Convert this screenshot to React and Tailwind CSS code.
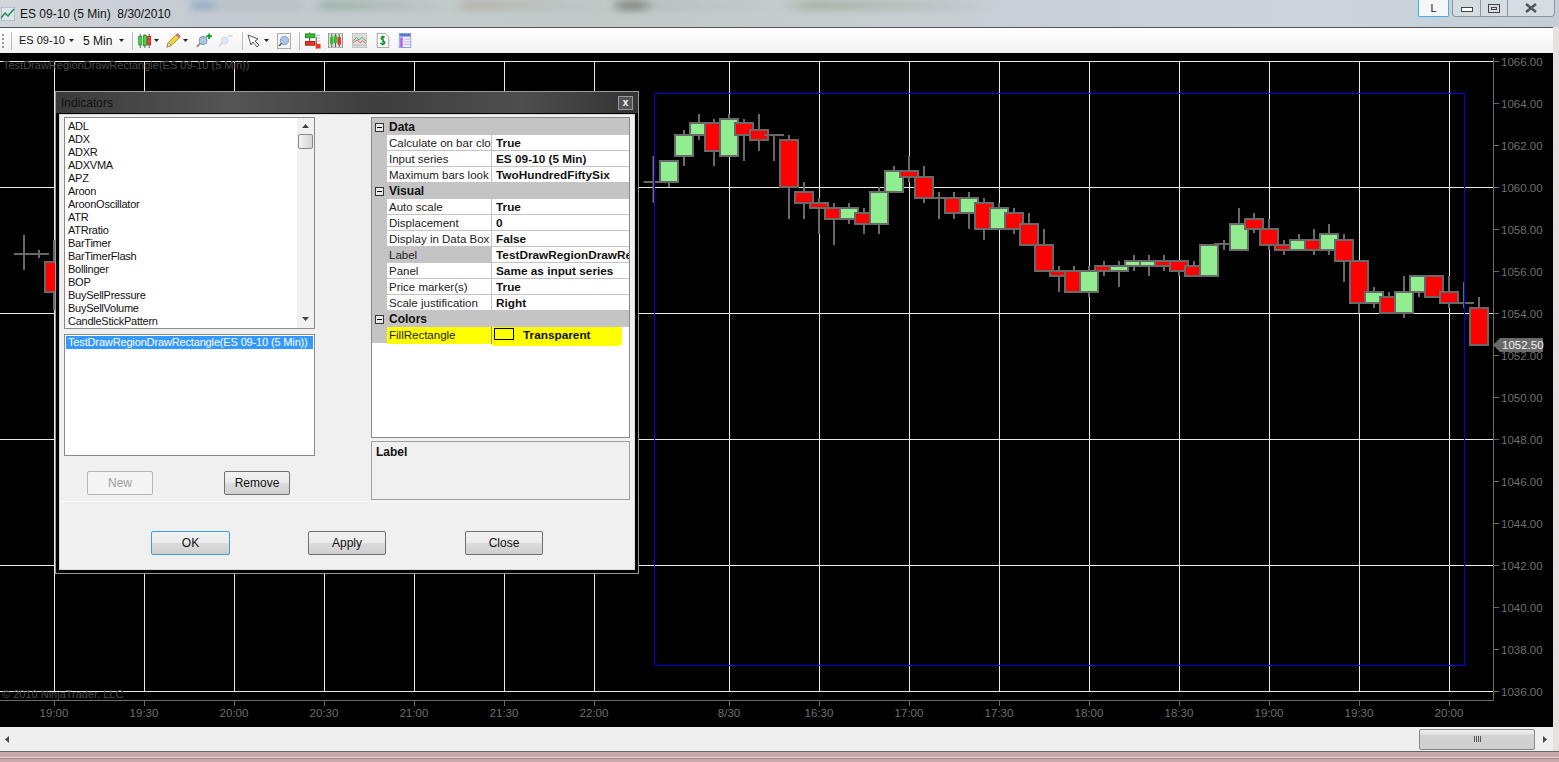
import React from 'react';

const font = { fontFamily: '"Liberation Sans", Arial, sans-serif' };

// [center x, body top, body bottom, wick top, wick bottom, color]
const G = '#90ee90';
const R = '#ff0000';
const candles = [
  [653.5, 182, 182, 156, 203, R],
  [669, 161, 182, 161, 187, G],
  [684, 135, 156, 130, 166, G],
  [699, 123, 135, 114, 140, G],
  [714, 123, 151, 119, 166, R],
  [729, 119, 156, 114, 156, G],
  [744, 123, 135, 119, 161, R],
  [759, 130, 140, 114, 151, R],
  [774, 135, 135, 135, 161, R],
  [789, 140, 187, 135, 219, R],
  [804, 192, 203, 182, 219, R],
  [819, 203, 208, 198, 234, R],
  [834, 208, 219, 203, 245, R],
  [849, 208, 219, 203, 224, G],
  [864, 213, 224, 208, 234, R],
  [879, 192, 224, 187, 234, G],
  [894, 171, 192, 166, 192, G],
  [909, 171, 177, 156, 182, R],
  [924, 177, 198, 166, 203, R],
  [939, 198, 198, 192, 219, R],
  [954, 198, 213, 192, 219, R],
  [969, 198, 213, 192, 229, G],
  [984, 203, 229, 198, 240, R],
  [999, 208, 229, 203, 229, G],
  [1014, 213, 229, 208, 234, R],
  [1029, 224, 245, 213, 245, R],
  [1044, 245, 271, 229, 271, R],
  [1059, 271, 276, 266, 292, R],
  [1074, 271, 292, 266, 292, R],
  [1089, 271, 292, 266, 297, G],
  [1104, 266, 271, 261, 276, R],
  [1119, 266, 271, 261, 287, G],
  [1134, 261, 266, 255, 271, G],
  [1149, 261, 266, 255, 276, G],
  [1164, 261, 266, 255, 271, R],
  [1179, 261, 271, 261, 276, R],
  [1194, 266, 276, 261, 276, R],
  [1209, 245, 276, 245, 276, G],
  [1224, 244, 244, 240, 250, R],
  [1239, 224, 250, 208, 250, G],
  [1254, 219, 229, 213, 233, R],
  [1269, 229, 245, 219, 250, R],
  [1284, 245, 250, 240, 255, R],
  [1299, 240, 250, 234, 250, G],
  [1314, 240, 250, 229, 255, R],
  [1329, 234, 250, 224, 255, G],
  [1344, 240, 261, 234, 282, R],
  [1359, 261, 303, 261, 313, R],
  [1374, 292, 303, 287, 308, G],
  [1389, 297, 313, 292, 313, R],
  [1404, 292, 313, 276, 318, G],
  [1419, 276, 292, 276, 297, G],
  [1434, 276, 297, 276, 297, R],
  [1449, 292, 303, 276, 308, R],
  [1464, 303, 303, 282, 308, R],
  [1479, 308, 345, 297, 345, R],
  [24, 254, 254, 235, 270, R],
  [39, 254, 254, 250, 258, R],
  [54, 262, 292, 240, 310, R],
];

const vGrid = [54, 144, 234, 324, 414, 504, 594, 729, 819, 909, 999, 1089, 1179, 1269, 1359, 1449];
const times = ['19:00', '19:30', '20:00', '20:30', '21:00', '21:30', '22:00', '8/30', '16:30', '17:00', '17:30', '18:00', '18:30', '19:00', '19:30', '20:00'];
const hGrid = [61, 187, 313, 439, 565, 691];
const prices = Array.from({ length: 16 }, (_, i) => ({ y: 61 + i * 42, label: (1066 - i * 2).toFixed(2) }));

const indicators = ['ADL', 'ADX', 'ADXR', 'ADXVMA', 'APZ', 'Aroon', 'AroonOscillator', 'ATR', 'ATRratio', 'BarTimer', 'BarTimerFlash', 'Bollinger', 'BOP', 'BuySellPressure', 'BuySellVolume', 'CandleStickPattern'];

const grid = [
  { title: 'Data', rows: [['Calculate on bar clos', 'True'], ['Input series', 'ES 09-10 (5 Min)'], ['Maximum bars look l', 'TwoHundredFiftySix']] },
  { title: 'Visual', rows: [['Auto scale', 'True'], ['Displacement', '0'], ['Display in Data Box', 'False'], ['Label', 'TestDrawRegionDrawRe', true], ['Panel', 'Same as input series'], ['Price marker(s)', 'True'], ['Scale justification', 'Right']] },
];

const Caret = ({ className = '' }) => (
  <svg width="5" height="3" viewBox="0 0 5 3" className={`shrink-0 ${className}`}><path d="M0 0h5L2.500 3z" fill="#222" /></svg>
);

const Chart = () => (
  <svg width="1553" height="674" viewBox="0 53 1553 674" className="block" style={font}>
    {vGrid.map(x => <line key={x} x1={x + 0.5} y1="61" x2={x + 0.5} y2="691" stroke="#e8e8e8" />)}
    {hGrid.map(y => <line key={y} x1="0" y1={y + 0.5} x2="1493" y2={y + 0.5} stroke="#e8e8e8" />)}
    <path d="M1493.500 58V700.500H0" fill="none" stroke="#6a6a6a" />
    {vGrid.map((x, i) => (
      <g key={x}>
        <line x1={x + 0.5} y1="700" x2={x + 0.5} y2="706" stroke="#6a6a6a" />
        <text x={x} y="717" fill="#6f6f6f" fontSize="11.5" textAnchor="middle">{times[i]}</text>
      </g>
    ))}
    {prices.map(p => (
      <g key={p.y}>
        <line x1="1493" y1={p.y + 0.5} x2="1499" y2={p.y + 0.5} stroke="#6a6a6a" />
        <text x="1501" y={p.y + 4.5} fill="#6f6f6f" fontSize="11.5">{p.label}</text>
      </g>
    ))}
    {candles.map(([x, top, bot, wt, wb, color], i) => (
      <g key={i}>
        <line x1={x} y1={wt} x2={x} y2={wb} stroke="#696969" strokeWidth="2" />
        {top === bot
          ? <line x1={x - 10} y1={top} x2={x + 10} y2={top} stroke="#696969" strokeWidth="2" />
          : <rect x={x - 9} y={top} width="18" height={bot - top} fill={color} stroke="#696969" strokeWidth="2" />}
      </g>
    ))}
    <rect x="654.500" y="93.500" width="810" height="572" fill="none" stroke="#0000e6" />
    <path d="M1493 345l7-7h43v14h-43z" fill="#6a6a6a" />
    <text x="1502" y="349" fill="#f4f4f4" fontSize="11.5">1052.50</text>
    <text x="3" y="69" fill="#4c4c4c" fontSize="11">TestDrawRegionDrawRectangle(ES 09-10 (5 Min))</text>
    <text x="2" y="698" fill="#4c4c4c" fontSize="11">© 2010 NinjaTrader, LLC</text>
  </svg>
);

const Btn = ({ children, w = 'w-[78px]', focus, disabled }) => (
  <button
    className={`${w} h-[24px] rounded-[2px] border text-[12px] ${disabled ? 'border-[#b5b5b5] bg-[#f4f4f4] text-[#a0a0a0]' : 'bg-[linear-gradient(#f2f2f2_0%,#ebebeb_48%,#dcdcdc_50%,#cfcfcf_100%)] text-[#111]'} ${focus ? 'border-[#3c9ed8]' : disabled ? '' : 'border-[#707070]'}`}
  >
    {children}
  </button>
);

const GroupHead = ({ title }) => (
  <div className="flex h-[16px] items-center bg-[#c4c4c4]">
    <div className="flex w-[15px] justify-center">
      <div className="flex h-[9px] w-[9px] items-center justify-center border border-[#333] bg-[#e8e8e8]">
        <div className="h-px w-[5px] bg-black" />
      </div>
    </div>
    <span className="pl-[2px] text-[12px] font-bold text-[#111]">{title}</span>
  </div>
);

const GridRow = ({ name, value, selected }) => (
  <div className="flex h-[16px] bg-[#c4c4c4] text-[12px] leading-[17px]">
    <div className="w-[15px] shrink-0" />
    <div className={`w-[105px] shrink-0 overflow-hidden whitespace-nowrap border-b border-r border-[#c4c4c4] pl-[2px] text-[11.5px] text-[#222] ${selected ? 'bg-[#c4c4c4]' : 'bg-white'}`}>{name}</div>
    <div className="flex-1 overflow-hidden whitespace-nowrap border-b border-[#c4c4c4] bg-white pl-[4px] text-[11.8px] font-bold text-[#111]">{value}</div>
  </div>
);

const IndicatorsDialog = () => (
  <div className="absolute left-[55px] top-[91px] flex h-[483px] w-[584px] flex-col border border-[#9a9a9a] bg-black" style={font}>
    <div className="flex h-[21px] shrink-0 items-center justify-between bg-[linear-gradient(90deg,#3a3a3a,#555_30%,#3e3e3e_55%,#4e4e4e_80%,#333)] pl-[5px] pr-[5px]">
      <span className="text-[12px] text-[#111]">Indicators</span>
      <div className="flex h-[14px] w-[15px] items-center justify-center border border-[#999] bg-[#555] text-[10px] font-bold leading-none text-white">x</div>
    </div>
    <div className="m-[3px] mt-[1px] flex flex-1 flex-col border border-[#d8d8d8] bg-[#f0f0f0]">
      <div className="flex h-[387px] shrink-0 border-b border-[#fafafa]">
        <div className="ml-[4px] mt-[2px] flex w-[251px] flex-col">
          <div className="flex h-[212px] border border-[#8a8a8a] bg-white pl-[3px]">
            <div className="flex-1 pt-[2px] text-[11px] leading-[13px] tracking-[-0.25px] text-[#111]">
              {indicators.map(n => <div key={n}>{n}</div>)}
            </div>
            <div className="flex w-[17px] flex-col items-center bg-[#f1f1f1]">
              <svg width="7" height="4" viewBox="0 0 7 4" className="mt-[6px]"><path d="M3.500 0L7 4H0z" fill="#444" /></svg>
              <div className="mt-[6px] h-[15px] w-[15px] rounded-[2px] border border-[#888] bg-[linear-gradient(90deg,#f2f2f2,#d4d4d4)]" />
              <svg width="7" height="4" viewBox="0 0 7 4" className="mt-auto mb-[7px]"><path d="M0 0h7L3.500 4z" fill="#444" /></svg>
            </div>
          </div>
          <div className="mt-[5px] h-[122px] border border-[#8a8a8a] bg-white p-px">
            <div className="h-[13px] whitespace-nowrap bg-[#3399ff] pl-[2px] text-[11px] leading-[13px] tracking-[-0.15px] text-white">TestDrawRegionDrawRectangle(ES 09-10 (5 Min))</div>
          </div>
          <div className="mt-[15px] flex pl-[23px]">
            <Btn w="w-[66px]" disabled>New</Btn>
            <div className="w-[71px]" />
            <Btn w="w-[66px]">Remove</Btn>
          </div>
        </div>
        <div className="ml-[56px] mt-[2px] flex w-[259px] flex-col">
          <div className="h-[321px] border border-[#8a8a8a] bg-white">
            <div className="h-px bg-[#c4c4c4]" />
            {grid.map(g => (
              <div key={g.title}>
                <GroupHead title={g.title} />
                {g.rows.map(([name, value, sel]) => <GridRow key={name} name={name} value={value} selected={sel} />)}
              </div>
            ))}
            <GroupHead title="Colors" />
            <div className="flex h-[20px] items-start text-[12px] leading-[16px]">
              <div className="h-[16px] w-[15px] shrink-0 bg-[#c4c4c4]" />
              <div className="h-[17px] w-[105px] shrink-0 border-r border-[#999] bg-[#ffff00] pl-[2px] text-[11.5px] text-[#222]">FillRectangle</div>
              <div className="flex h-[19px] w-[130px] shrink-0 rounded-br-[4px] bg-[#ffff00] pl-[2px] pt-[1px] text-[11.8px] font-bold text-[#111]">
                <div className="mr-[9px] h-[12px] w-[20px] border border-black" />
                <span className="-mt-[1px]">Transparent</span>
              </div>
            </div>
          </div>
          <div className="mt-[3px] h-[59px] border border-[#a0a0a0] p-[3px] pl-[4px] text-[12px] font-bold leading-[14px] text-[#111]">Label</div>
        </div>
      </div>
      <div className="flex flex-1 items-start pl-[91px] pt-[29px]">
        <Btn w="w-[79px]" focus>OK</Btn>
        <div className="w-[78px]" />
        <Btn>Apply</Btn>
        <div className="w-[79px]" />
        <Btn>Close</Btn>
      </div>
    </div>
  </div>
);

const CandleIcon = () => (
  <svg width="15" height="14" viewBox="0 0 18 18" className="shrink-0">
    <path d="M3.500 0v18M9.500 0v18M15 0v18" stroke="#333" />
    <rect x="1.500" y="3" width="4" height="11" fill="#4cd14c" stroke="#2a8a2a" />
    <rect x="7.500" y="2" width="4" height="13" fill="#4cd14c" stroke="#2a8a2a" />
    <rect x="13" y="3" width="4" height="11" fill="#ee4433" stroke="#993322" />
  </svg>
);

const Pencil = () => (
  <svg width="15" height="15" viewBox="0 0 17 17" className="shrink-0">
    <path d="M1 16l1.500-5L11.500 2l3.500 3.500L6 14z" fill="#f2d43c" stroke="#a88a20" />
    <path d="M11.500 2l1.500-1.500 3.500 3.500L15 5z" fill="#e88" stroke="#a66" />
    <path d="M1 16l1.500-5 3.500 3z" fill="#eed" stroke="#887" />
  </svg>
);

const Zoomer = ({ faded, plus }) => (
  <svg width={plus ? 17 : 16} height="15" viewBox="0 0 24 20" className={faded ? 'shrink-0 opacity-30' : 'shrink-0'}>
    <circle cx="10" cy="10" r="5.500" fill="#a9c8e8" stroke="#8a9aaa" strokeWidth="1.500" />
    <path d="M6 14l-5 5" stroke="#8a8f94" strokeWidth="2.500" />
    {plus
      ? <path d="M18.500 0v8M14.500 4h8" stroke="#10a020" strokeWidth="2.500" />
      : <path d="M15 3h7" stroke="#666" strokeWidth="2" />}
  </svg>
);

const Sep = ({ className }) => <div className={`h-[18px] w-px shrink-0 bg-[#bbb] ${className}`} />;

const Toolbar = () => (
  <div className="flex h-[26px] shrink-0 items-center border-t border-[#555] bg-[linear-gradient(#fff,#f2f2f2)] text-[12px] text-[#111]" style={font}>
    <div className="ml-[2px] h-[14px] w-[3px] shrink-0 border-l-2 border-dotted border-[#999]" />
    <Sep className="ml-[6px]" />
    <span className="ml-[7px] w-[44px] whitespace-nowrap text-[11px]">ES 09-10</span>
    <Caret className="ml-[6px]" />
    <span className="ml-[9px] w-[30px] whitespace-nowrap">5 Min</span>
    <Caret className="ml-[6px]" />
    <Sep className="ml-[8px]" />
    <div className="ml-[4px]"><CandleIcon /></div>
    <Caret className="ml-[2px]" />
    <div className="ml-[7px]"><Pencil /></div>
    <Caret className="ml-[2px]" />
    <div className="ml-[8px]"><Zoomer plus /></div>
    <div className="ml-[5px]"><Zoomer faded /></div>
    <Sep className="ml-[8px]" />
    <svg width="13" height="14" viewBox="0 0 13 14" className="ml-[4px] shrink-0"><path d="M1 1l3 10 2-3 4 5 2-2-4-4 3-2z" fill="#fff" stroke="#555" /></svg>
    <Caret className="ml-[4px]" />
    <div className="ml-[8px] flex h-[16px] w-[14px] shrink-0 items-center justify-center border border-[#aaa] bg-[#f6f6f6]">
      <svg width="12" height="12" viewBox="0 0 13 13"><circle cx="7" cy="6" r="4.500" fill="#a9c8e8" stroke="#7f98b0" /><path d="M4 9l-3 3" stroke="#555" strokeWidth="1.500" /></svg>
    </div>
    <Sep className="ml-[8px]" />
    <svg width="16" height="17" viewBox="0 0 17 17" className="ml-[5px] shrink-0">
      <path d="M5 0v9M12 5v12" stroke="#333" />
      <rect x="0.500" y="1.500" width="10" height="4" fill="#33bb33" stroke="#228822" />
      <rect x="0.500" y="9.500" width="10" height="4" fill="#e83322" stroke="#992211" />
      <rect x="11.500" y="12" width="5" height="5" fill="#e83322" />
      <path d="M11 3h5M11 6h5M11 9h5" stroke="#bbb" />
    </svg>
    <svg width="15" height="15" viewBox="0 0 17 18" className="ml-[7px] shrink-0">
      <rect width="17" height="18" fill="#ddd" stroke="#888" />
      <path d="M4 1v16M13 1v16M8.500 1v16" stroke="#444" />
      <rect x="2" y="5" width="4" height="8" fill="#33bb33" /><rect x="6.500" y="3" width="4" height="9" fill="#33bb33" /><rect x="11" y="5" width="4" height="9" fill="#e83322" />
    </svg>
    <svg width="15" height="15" viewBox="0 0 17 17" className="ml-[9px] shrink-0">
      <rect width="17" height="17" fill="#dcdcdc" stroke="#aaa" />
      <path d="M1 9l4-4 3 3 3-3 5 4" fill="none" stroke="#3aaa55" />
      <path d="M1 11l5-3 3 3 3-2 4 3" fill="none" stroke="#e05555" />
      <path d="M1 14h15" stroke="#bbb" />
    </svg>
    <svg width="14" height="15" viewBox="0 0 14 17" className="ml-[9px] shrink-0">
      <path d="M.5.500h9l4 4v12H.500z" fill="#fafafa" stroke="#999" />
      <path d="M9 4.500C6 3 4 5 5.500 7S10 9.500 9 11.500 5 13 4 11M7 3v11" fill="none" stroke="#108a30" strokeWidth="1.500" />
    </svg>
    <svg width="14" height="15" viewBox="0 0 14 17" className="ml-[8px] shrink-0">
      <rect x=".5" y=".5" width="13" height="16" fill="#eef" stroke="#8899cc" />
      <rect x="1" y="1" width="12" height="3" fill="#5577cc" />
      <rect x="1.500" y="5" width="3" height="11" fill="#aa66ee" />
      <path d="M6 7h7M6 10h7M6 13h7" stroke="#b4b4d8" />
    </svg>
  </div>
);

export default function App() {
  return (
    <div className="relative flex h-[762px] w-[1559px] flex-col overflow-hidden bg-[#e6e0e0]" style={font}>
      {/* Title bar, aero glass over a blurred browser window */}
      <div className="relative flex h-[27px] shrink-0 items-center overflow-hidden bg-[linear-gradient(90deg,#d2d6da,#c4ccd2_13%,#c2cac8_40%,#c8d0d6_65%,#cbd4dd_85%,#c6ced6)] pl-[1px]">
        <div className="absolute left-0 right-0 top-0 h-[11px] opacity-45 blur-[3px] bg-[linear-gradient(90deg,transparent_12%,#6f93b5_12.500%,#6f93b5_13.500%,#aeb6ba_14%,#aeb6ba_19%,transparent_20%,#7a9a8a_21%,#aab4b0_26%,transparent_29%,#a8a08a_30%,#b4bab8_36%,transparent_39%,#4a4a44_40%,#4a4a44_41%,#aab2b4_42%,transparent_50%,#8a9a78_52%,#b0b8b8_60%,transparent_64%)]" />
        <svg width="14" height="14" viewBox="0 0 14 14" className="relative">
          <rect width="14" height="14" fill="#dde4ee" stroke="#8fa0b8" />
          <path d="M0 11l4-5 3 3 6-7" fill="none" stroke="#1f8a4a" strokeWidth="1.500" />
        </svg>
        <span className="relative ml-[5px] text-[12px] text-[#111]">ES 09-10 (5 Min)&nbsp;&nbsp;8/30/2010</span>
        <div className="relative ml-auto flex items-start self-start">
          <div className="flex h-[17px] w-[31px] items-center justify-center rounded-b-[2px] border border-t-0 border-[#39b4e6] bg-[#f4f6f8] text-[11px] text-[#223]">L</div>
          <div className="ml-[3px] mr-[4px] flex h-[17px] rounded-b-[4px] border border-t-0 border-[#8c96a0] bg-[#d5dce2]">
            <div className="flex w-[28px] items-center justify-center border-r border-[#8c96a0]"><div className="mt-[3px] h-[5px] w-[12px] border border-[#444] bg-white" /></div>
            <div className="flex w-[27px] items-center justify-center border-r border-[#8c96a0]"><div className="flex h-[9px] w-[12px] items-center justify-center border border-[#444]"><div className="h-[3px] w-[6px] border border-[#444]" /></div></div>
            <div className="flex w-[46px] items-center justify-center">
              <svg width="12" height="10" viewBox="0 0 12 10"><path d="M1 1l10 8M11 1L1 9" stroke="#555" strokeWidth="2.500" /></svg>
            </div>
          </div>
        </div>
      </div>

      <div className="mr-[6px] flex flex-1 flex-col">
        <Toolbar />
        <div className="relative h-[674px] shrink-0 bg-black">
          <Chart />
        </div>
        {/* Horizontal scrollbar */}
        <div className="flex h-[24px] shrink-0 items-center bg-[#efefef]">
          <svg width="4" height="7" viewBox="0 0 4 7" className="ml-[5px]"><path d="M4 0v7L0 3.500z" fill="#444" /></svg>
          <div className="ml-auto flex h-[21px] w-[116px] items-center justify-center gap-px rounded-[2px] border border-[#888] bg-[linear-gradient(#eee_0%,#e4e4e4_20%,#d2d2d2_30%,#cfcfcf_100%)]">
            <div className="h-[6px] w-px bg-[#555]" /><div className="h-[6px] w-px bg-[#555]" /><div className="h-[6px] w-px bg-[#555]" /><div className="h-[6px] w-px bg-[#555]" />
          </div>
          <svg width="4" height="7" viewBox="0 0 4 7" className="ml-[8px] mr-[6px]"><path d="M0 0v7l4-3.500z" fill="#444" /></svg>
        </div>
      </div>
      <div className="h-px shrink-0 bg-[#666]" />
      <div className="h-[10px] shrink-0 bg-[linear-gradient(#c8a8a8_0%,#c8a8a8_50%,#e0d8d8_55%,#6a6a6a_60%,#c8a8a8_70%)]" />

      <IndicatorsDialog />
    </div>
  );
}
